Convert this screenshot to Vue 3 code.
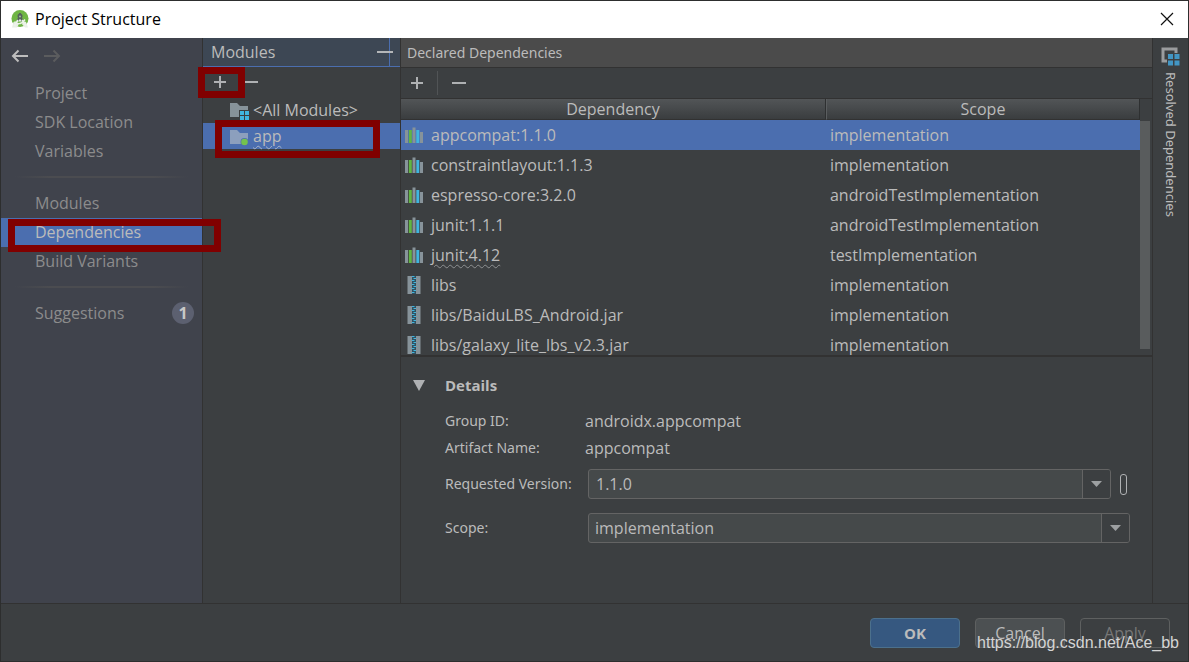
<script setup>
import { ref } from 'vue'

const navGroups = [
  ['Project', 'SDK Location', 'Variables'],
  ['Modules', 'Dependencies', 'Build Variants'],
  ['Suggestions'],
]
const activeNav = ref('Dependencies')

const dependencies = [
  { name: 'appcompat:1.1.0', scope: 'implementation', kind: 'library' },
  { name: 'constraintlayout:1.1.3', scope: 'implementation', kind: 'library' },
  { name: 'espresso-core:3.2.0', scope: 'androidTestImplementation', kind: 'library' },
  { name: 'junit:1.1.1', scope: 'androidTestImplementation', kind: 'library' },
  { name: 'junit:4.12', scope: 'testImplementation', kind: 'library', warn: true },
  { name: 'libs', scope: 'implementation', kind: 'jar' },
  { name: 'libs/BaiduLBS_Android.jar', scope: 'implementation', kind: 'jar' },
  { name: 'libs/galaxy_lite_lbs_v2.3.jar', scope: 'implementation', kind: 'jar' },
]
const selected = ref(0)
const version = ref('1.1.0')
const scope = ref('implementation')
const teeth = [0, 1, 2, 3, 4, 5, 6, 7, 8]
</script>

<template>
  <div class="window">
    <header class="titlebar">
      <svg class="logo" width="18" height="18" viewBox="0 0 18 18">
        <circle cx="9" cy="8.500" r="8.500" fill="#6fb544" />
        <path d="M2.500 12L1 17.500h5L9 12l5 5.500h3L15 12l-6-3z" fill="#e9efe6" />
        <path d="M4 11.500h10L9 15z" fill="#6fb544" />
        <path d="M9 3v3M6.500 11L9 6l2.500 5" stroke="#55625c" stroke-width="2" fill="none" />
        <circle cx="9" cy="6" r="2.500" fill="#55625c" />
        <circle cx="9" cy="6.500" r="0.900" fill="#a9c7a0" />
        <path d="M7 10L3.500 16M11 10l4 6M4.500 12.500c3 2 6.500 1.500 9.500-3" stroke="#edf3ea" stroke-width="1.500" fill="none" />
      </svg>
      <h1>Project Structure</h1>
      <button class="close" aria-label="Close">
        <svg width="14" height="14" viewBox="0 0 14 14"><path d="M1 1l12 12M13 1L1 13" stroke="#111" stroke-width="1.200" /></svg>
      </button>
    </header>

    <div class="body">
      <aside class="sidebar">
        <div class="history">
          <button aria-label="Back">
            <svg width="18" height="14" viewBox="0 0 18 14"><path d="M17 7H2M7.500 1.500L2 7l5.500 5.500" stroke="#bdbdbd" stroke-width="2" fill="none" /></svg>
          </button>
          <button aria-label="Forward" disabled>
            <svg width="18" height="14" viewBox="0 0 18 14"><path d="M0 7h15M9.500 1.500L15 7l-5.500 5.500" stroke="#5b5c5e" stroke-width="2" fill="none" /></svg>
          </button>
        </div>
        <nav>
          <ul v-for="(group, i) in navGroups" :key="i">
            <li v-for="item in group" :key="item">
              <button class="nav-item" :class="{ active: item === activeNav }" @click="activeNav = item">
                <span>{{ item }}</span>
                <span v-if="item === 'Suggestions'" class="count">1</span>
              </button>
              <span v-if="item === 'Dependencies'" class="mark mark-nav"></span>
            </li>
          </ul>
        </nav>
      </aside>

      <section class="modules">
        <div class="modules-head">
          <h2>Modules</h2>
          <button class="hide" aria-label="Hide">
            <svg width="16" height="28" viewBox="0 0 16 28"><path d="M12.500 0v28" stroke="#4b6eaf" /><path d="M0 14h16" stroke="#b4b6b8" stroke-width="2" /></svg>
          </button>
        </div>
        <div class="modules-tools">
          <button aria-label="Add module">
            <svg width="14" height="14" viewBox="0 0 14 14"><path d="M7 1v12M1 7h12" stroke="#afb1b3" stroke-width="2" /></svg>
          </button>
          <button aria-label="Remove module">
            <svg width="14" height="14" viewBox="0 0 14 14"><path d="M0 7h13" stroke="#afb1b3" stroke-width="2" /></svg>
          </button>
          <span class="mark mark-add"></span>
        </div>
        <ul class="tree">
          <li>
            <svg width="20" height="20" viewBox="0 0 20 20">
              <path d="M0 3h7l3 3h8v11H0z" fill="#87939a" />
              <path d="M9 10h11v10H9z" fill="#3c3f41" />
              <path d="M10 11h4v4h-4zM15 11h4v4h-4zM10 16h4v4h-4zM15 16h4v4h-4z" fill="#40b6e0" />
            </svg>
            <span>&lt;All Modules&gt;</span>
          </li>
          <li class="active">
            <svg width="20" height="20" viewBox="0 0 20 20">
              <path d="M0 4h7l3 3h8v11H0z" fill="#8c9fbd" />
              <circle cx="14.500" cy="16" r="4" fill="#4b6eaf" />
              <circle cx="14.500" cy="16" r="3.300" fill="#74c24d" />
            </svg>
            <span class="wavy">app</span>
            <span class="mark mark-app"></span>
          </li>
        </ul>
      </section>

      <main class="content">
        <h2 class="content-head">Declared Dependencies</h2>
        <div class="toolbar">
          <button aria-label="Add dependency">
            <svg width="14" height="14" viewBox="0 0 14 14"><path d="M7 1v12M1 7h12" stroke="#afb1b3" stroke-width="2" /></svg>
          </button>
          <span class="tool-sep"></span>
          <button aria-label="Remove dependency">
            <svg width="14" height="14" viewBox="0 0 14 14"><path d="M0 7h14" stroke="#afb1b3" stroke-width="2" /></svg>
          </button>
        </div>

        <div class="list">
          <table>
            <thead>
              <tr><th class="col-name">Dependency</th><th>Scope</th></tr>
            </thead>
            <tbody>
              <tr v-for="(dep, i) in dependencies" :key="dep.name" :class="{ active: i === selected }" @click="selected = i">
                <td>
                  <div class="dep">
                    <svg v-if="dep.kind === 'library'" width="20" height="18" viewBox="0 0 20 18">
                      <path d="M0 4h3v13H0zM7.500 1.500h3v15.500h-3zM15 6h3v11h-3z" fill="#87939a" />
                      <path d="M3.800 4h3v13h-3z" fill="#62b543" />
                      <path d="M11.300 4h3v13h-3z" fill="#40b6e0" />
                    </svg>
                    <svg v-else width="20" height="18" viewBox="0 0 20 18">
                      <path d="M2.500 0H7v18H2.500zM11 0h4.500v18H11z" fill="#87939a" />
                      <path d="M7 0h4v18H7z" fill="#31505f" />
                      <rect v-for="t in teeth" :key="t" :x="t % 2 ? 8.500 : 7" :y="t * 2" width="2.500" height="1" fill="#40b6e0" />
                    </svg>
                    <span :class="{ wavy: dep.warn }">{{ dep.name }}</span>
                  </div>
                </td>
                <td class="scope">{{ dep.scope }}</td>
              </tr>
            </tbody>
          </table>
          <div class="scroll"><div class="thumb"></div></div>
        </div>

        <section class="details">
          <button class="details-head" aria-expanded="true">
            <svg width="12" height="11" viewBox="0 0 12 11"><path d="M0 0h12L6 11z" fill="#afb1b3" /></svg>
            <span>Details</span>
          </button>
          <dl>
            <dt>Group ID:</dt><dd>androidx.appcompat</dd>
            <dt>Artifact Name:</dt><dd>appcompat</dd>
          </dl>
          <div class="field">
            <label for="version">Requested Version:</label>
            <div class="combo">
              <input id="version" v-model="version" type="text" />
              <button class="drop" aria-label="Show versions">
                <svg width="11" height="6" viewBox="0 0 11 6"><path d="M0 0h11L5.500 6z" fill="#9da0a2" /></svg>
              </button>
            </div>
            <button class="link" aria-label="Bind to variable"></button>
          </div>
          <div class="field">
            <label for="scope">Scope:</label>
            <div class="combo">
              <select id="scope" v-model="scope">
                <option>implementation</option>
                <option>testImplementation</option>
                <option>androidTestImplementation</option>
              </select>
              <span class="drop">
                <svg width="11" height="6" viewBox="0 0 11 6"><path d="M0 0h11L5.500 6z" fill="#9da0a2" /></svg>
              </span>
            </div>
          </div>
        </section>
      </main>

      <aside class="stripe">
        <button>
          <svg width="19" height="19" viewBox="0 0 19 19">
            <path d="M2 2h13v12H2z" stroke="#9a9c9e" stroke-width="3" fill="none" />
            <path d="M6 6h13v13H6z" fill="#3c3f41" />
            <path d="M7 7h5v5H7zM13.500 7h5v5h-5zM7 13.500h5v5H7zM13.500 13.500h5v5h-5z" fill="#4296c4" />
          </svg>
          <span>Resolved Dependencies</span>
        </button>
      </aside>
    </div>

    <footer>
      <button class="btn primary">OK</button>
      <button class="btn">Cancel</button>
      <button class="btn" disabled>Apply</button>
      <span class="watermark">https://blog.csdn.net/Ace_bb</span>
    </footer>
  </div>
</template>

<style>
body {
  background: #3c3f41;
}
</style>

<style scoped>
* {
  box-sizing: border-box;
}
.window {
  display: flex;
  flex-direction: column;
  height: 100vh;
  border: 1px solid #2d2e2e;
  background: #3c3f41;
  color: #bbbbbb;
  font: 16px/20px "Open Sans", "Noto Sans", sans-serif;
  overflow: hidden;
}
button, input, select {
  font: inherit;
  color: inherit;
  background: none;
  border: 0;
  padding: 0;
  margin: 0;
}
h1, h2, ul, dl, dd {
  margin: 0;
  padding: 0;
  font-size: 16px;
  font-weight: 400;
  list-style: none;
}
svg {
  display: block;
  flex: none;
}
.titlebar {
  display: flex;
  align-items: center;
  flex: none;
  height: 37px;
  padding: 0 14px 2px 10px;
  background: #fff;
  color: #000;
}
.titlebar h1 {
  margin-left: 6px;
}
.close {
  margin-left: auto;
}
.body {
  display: flex;
  flex: 1;
  min-height: 0;
}
.sidebar {
  flex: none;
  width: 202px;
  background: #40434c;
  border-right: 1px solid #323232;
  color: #8c8c8c;
}
.history {
  display: flex;
  gap: 15px;
  height: 41px;
  padding: 11px 10px 0;
}
.history button {
  height: 14px;
}
nav ul + ul::before {
  content: "";
  display: block;
  height: 2px;
  margin: 10px 14px 11px;
  background: linear-gradient(90deg, transparent, #4b4c50 20%, #4b4c50 80%, transparent);
}
nav li {
  position: relative;
}
.nav-item {
  display: flex;
  align-items: center;
  justify-content: space-between;
  width: 100%;
  height: 29px;
  padding: 0 8px 2px 34px;
}
.nav-item.active {
  background: #4b6eaf;
  color: #bbbbbb;
}
.count {
  width: 22px;
  height: 22px;
  border-radius: 50%;
  background: #5c6070;
  color: #c8c8c8;
  font-weight: 700;
  line-height: 22px;
  text-align: center;
}
.mark {
  position: absolute;
  z-index: 2;
  border: 7px solid #800000;
  pointer-events: none;
}
.mark-nav {
  top: 1px;
  left: 7px;
  width: 213px;
  height: 33px;
}
.mark-add {
  top: 0;
  left: -5px;
  width: 47px;
  height: 31px;
}
.mark-app {
  top: -3px;
  left: 12px;
  width: 165px;
  height: 38px;
}
.modules {
  flex: none;
  width: 198px;
  border-right: 1px solid #323232;
}
.modules-head {
  display: flex;
  align-items: center;
  justify-content: space-between;
  height: 29px;
  padding: 0 7px 0 8px;
  background: #3d4754;
  border-bottom: 1px solid #4b6eaf;
}
.modules-tools {
  position: relative;
  display: flex;
  align-items: center;
  gap: 18px;
  height: 30px;
  padding-left: 10px;
}
.tree li {
  position: relative;
  display: flex;
  align-items: center;
  gap: 3px;
  height: 26px;
  padding-left: 27px;
}
.tree li.active {
  background: #4b6eaf;
}
.wavy {
  text-decoration: underline wavy #8f9193 1px;
  text-underline-offset: 3px;
}
.tree .wavy {
  text-decoration-color: #a9b4c8;
}
.content {
  display: flex;
  flex: 1;
  flex-direction: column;
  min-width: 0;
}
.content-head {
  flex: none;
  height: 30px;
  padding-left: 6px;
  background: #4b4b4b;
  border-bottom: 1px solid #323232;
  font: 14px/29px "Noto Sans", "Open Sans", sans-serif;
}
.toolbar {
  display: flex;
  align-items: center;
  flex: none;
  height: 31px;
  padding-left: 9px;
  border-bottom: 1px solid #323232;
}
.tool-sep {
  width: 1px;
  height: 24px;
  margin: 0 14px 0 13px;
  background: #515456;
}
.list {
  display: flex;
  flex: 1;
  min-height: 0;
  overflow: hidden;
}
table {
  flex: 1;
  align-self: flex-start;
  width: 100%;
  table-layout: fixed;
  border-collapse: separate;
  border-spacing: 0;
}
th {
  height: 21px;
  padding: 0;
  background: linear-gradient(#525557, #3a3d3f);
  border-right: 1px solid #2e3031;
  border-bottom: 1px solid #323232;
  font-weight: 400;
  line-height: 20px;
}
th + th {
  border-left: 1px solid #5b5e60;
}
.col-name {
  width: 57.5%;
}
td {
  height: 30px;
  padding: 0 4px;
}
.dep {
  display: flex;
  align-items: center;
  gap: 6px;
}
tr.active td {
  background: #4b6eaf;
}
.scroll {
  flex: none;
  width: 12px;
  padding: 22px 2px 6px 0;
}
.thumb {
  height: 100%;
  background: #595c5d;
}
.details {
  flex: none;
  padding: 18px 22px 60px 12px;
  border-top: 2px solid #323232;
}
.details-head {
  display: flex;
  align-items: center;
  gap: 20px;
  font-size: 15px;
  font-weight: 700;
}
dl {
  display: grid;
  grid-template-columns: 140px 1fr;
  row-gap: 7px;
  margin: 16px 0 11px 32px;
}
dt, label {
  font: 14px/20px "Noto Sans", "Open Sans", sans-serif;
}
.field {
  display: flex;
  align-items: center;
  padding-left: 32px;
}
.field + .field {
  margin-top: 14px;
}
label {
  flex: none;
  width: 143px;
}
.combo {
  display: flex;
  flex: 1;
  height: 30px;
  background: #45494a;
  border: 1px solid #646464;
  border-radius: 3px;
  overflow: hidden;
}
.combo input, .combo select {
  flex: 1;
  min-width: 0;
  padding: 0 7px 1px;
  outline: 0;
  appearance: none;
}
.combo select {
  padding: 0 6px 1px;
}
.drop {
  display: flex;
  align-items: center;
  justify-content: center;
  width: 28px;
  background: #3c3f41;
  border-left: 1px solid #646464;
}
span.drop {
  pointer-events: none;
}
.link {
  width: 7px;
  height: 21px;
  margin: 0 3px 0 9px;
  border: 1px solid #afb1b3;
  border-radius: 3px;
}
.stripe {
  flex: none;
  width: 36px;
  border-left: 1px solid #323232;
}
.stripe button {
  display: flex;
  flex-direction: column;
  align-items: center;
  gap: 6px;
  width: 100%;
  padding-top: 9px;
}
.stripe span {
  writing-mode: vertical-rl;
  font: 13px/20px "Noto Sans", "Open Sans", sans-serif;
}
footer {
  position: relative;
  display: flex;
  flex: none;
  justify-content: flex-end;
  gap: 15px;
  padding: 14px 18px 13px;
  border-top: 1px solid #323232;
}
.btn {
  width: 90px;
  height: 30px;
  border: 1px solid #5e6060;
  border-radius: 4px;
  background: #4c5052;
}
.btn.primary {
  border-color: #4c708c;
  background: #365880;
  font-size: 15px;
  font-weight: 700;
}
.btn:disabled {
  background: none;
  color: #777777;
}
.watermark {
  position: absolute;
  right: 9px;
  bottom: 8px;
  color: #d4d4d4;
  font: 16px/20px "Liberation Sans", Arial, sans-serif;
}
</style>
